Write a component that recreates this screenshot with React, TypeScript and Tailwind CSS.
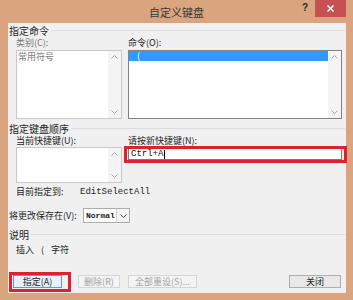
const cjk = "font-['Noto_Sans_CJK_SC','Microsoft_YaHei',sans-serif]"
const mono = "font-['Liberation_Mono','DejaVu_Sans_Mono',monospace]"

function ScrollBar() {
  return (
    <div className="w-[13px] h-full flex flex-col justify-between items-center py-[4px] bg-[#f4f4f4]">
      <svg width="7" height="4" viewBox="0 0 7 4">
        <path d="M0.5 3.5 L3.5 0.5 L6.5 3.5" stroke="#a8a8a8" fill="none" />
      </svg>
      <svg width="7" height="4" viewBox="0 0 7 4">
        <path d="M0.5 0.5 L3.5 3.5 L6.5 0.5" stroke="#a8a8a8" fill="none" />
      </svg>
    </div>
  )
}

function GroupHeader({ title, className = '' }: { title: string; className?: string }) {
  return (
    <div className={`flex items-center h-[13px] pl-[1px] pr-[1px] ${className}`}>
      <span className="text-[10px] leading-[12px] text-[#1e1e1e]">{title}</span>
      <div className="flex-1 h-px bg-[#dcdcdc] ml-[2px]" />
    </div>
  )
}

function Button({ label, disabled, primary, className = '' }: { label: string; disabled?: boolean; primary?: boolean; className?: string }) {
  return (
    <div
      className={`h-[13px] flex items-center justify-center border text-[9px] leading-[11px] ${
        primary ? 'border-[#5b9bd5] bg-[#e5f1fb]' : disabled ? 'border-[#d5d5d5] bg-[#f4f4f4]' : 'border-[#adadad] bg-[#e8e8e8]'
      } ${disabled ? 'text-[#a3a3a3]' : 'text-[#1e1e1e]'} ${className}`}
    >
      {label}
    </div>
  )
}

export default function App() {
  return (
    <div className={`w-[353px] h-[300px] bg-[#d9a47e] flex flex-col ${cjk} overflow-hidden`}>
      {/* title bar */}
      <div className="h-[23px] relative flex items-center justify-center">
        <span className="text-[11px] leading-[14px] text-[#3a3a3a] mt-[1px]">自定义键盘</span>
        <span className="absolute left-[302px] top-[0px] text-[10px] font-bold text-[#2a2a2a] font-['Liberation_Sans',sans-serif]">?</span>
        <div className="absolute left-[315px] top-0 w-[31px] h-[17px] bg-[#c75050] flex items-center justify-center">
          <svg width="7" height="7" viewBox="0 0 7 7">
            <path d="M0.5 0.5 L6.5 6.5 M6.5 0.5 L0.5 6.5" stroke="#fff" strokeWidth="1.5" />
          </svg>
        </div>
      </div>

      {/* content */}
      <div className="flex-1 ml-[8px] mr-[7px] mb-[7px] bg-[#f0f0f0] relative">
        <GroupHeader title="指定命令" className="mt-[1px]" />
        <div className="flex gap-[6px] pl-[8px] pr-[4px]">
          <div className="w-[106px]">
            <div className="h-[12px] text-[9px] leading-[12px] text-[#7a7a7a]">类别(C):</div>
            <div className="mt-[1px] h-[69px] bg-white border border-[#c8c8c8] flex">
              <div className="flex-1 text-[9px] leading-[11px] text-[#7a7a7a] pl-[1px]">常用符号</div>
              <ScrollBar />
            </div>
          </div>
          <div className="flex-1">
            <div className="h-[12px] text-[9px] leading-[12px] text-[#1e1e1e]">命令(O):</div>
            <div className="mt-[1px] h-[69px] bg-white border border-[#828282] flex">
              <div className="flex-1">
                <div className="h-[10px] bg-[#3399ff] text-white text-[9px] leading-[10px] pl-[8px]">(</div>
              </div>
              <ScrollBar />
            </div>
          </div>
        </div>

        <GroupHeader title="指定键盘顺序" className="mt-[3px]" />
        <div className="flex gap-[6px] pl-[8px] pr-[4px]">
          <div className="w-[106px]">
            <div className="h-[12px] text-[9px] leading-[12px] text-[#1e1e1e]">当前快捷键(U):</div>
            <div className="h-[36px] bg-white border border-[#c8c8c8] flex">
              <div className="flex-1" />
              <ScrollBar />
            </div>
          </div>
          <div className="flex-1">
            <div className="h-[12px] text-[9px] leading-[12px] text-[#1e1e1e]">请按新快捷键(N):</div>
            <div className="mt-[1px] h-[12px] bg-white border border-[#7a7a7a] flex items-center pl-[2px]">
              <span className={`${mono} text-[9px] leading-[10px] text-[#111]`}>Ctrl+A</span>
              <span className="w-px h-[9px] bg-black ml-[1px]" />
            </div>
          </div>
        </div>

        <div className="flex h-[12px] items-center mt-[3px] pl-[8px] text-[9px] leading-[12px] text-[#1e1e1e]">
          <span className="w-[64px]">目前指定到:</span>
          <span className={`${mono} text-[9px]`}>EditSelectAll</span>
        </div>

        <div className="flex h-[15px] items-center mt-[10px] pl-[1px]">
          <span className="w-[74px] text-[9px] leading-[12px] text-[#1e1e1e]">将更改保存在(V):</span>
          <div className="w-[47px] h-[15px] bg-white border border-[#acacac] flex">
            <span className={`flex-1 ${mono} text-[8px] leading-[13px] font-bold pl-[2px] text-[#222]`}>Normal</span>
            <div className="w-[13px] border-l border-[#d0d0d0] bg-[#f4f4f4] flex items-center justify-center">
              <svg width="7" height="4" viewBox="0 0 7 4">
                <path d="M0.5 0.5 L3.5 3.5 L6.5 0.5" stroke="#444" fill="none" />
              </svg>
            </div>
          </div>
        </div>

        <GroupHeader title="说明" className="mt-[5px]" />
        <div className="h-[12px] mt-[3px] pl-[8px] text-[9px] leading-[12px] text-[#1e1e1e] flex gap-[7px]">
          <span>插入</span>
          <span>(</span>
          <span>字符</span>
        </div>

        <div className="flex mt-[19px] pl-[5px] pr-[5px]">
          <Button label="指定(A)" primary className="w-[49px]" />
          <Button label="删除(R)" disabled className="w-[42px] ml-[16px]" />
          <Button label="全部重设(S)..." disabled className="w-[69px] ml-[8px]" />
          <Button label="关闭" className="w-[52px] ml-auto" />
        </div>

        {/* red annotation boxes */}
        <div className="absolute left-[116px] top-[123px] w-[223px] h-[17px] border-[3px] border-[#e0202e]" />
        <div className="absolute left-[1px] top-[249px] w-[62px] h-[20px] border-[3px] border-[#e0202e]" />
      </div>
    </div>
  )
}
